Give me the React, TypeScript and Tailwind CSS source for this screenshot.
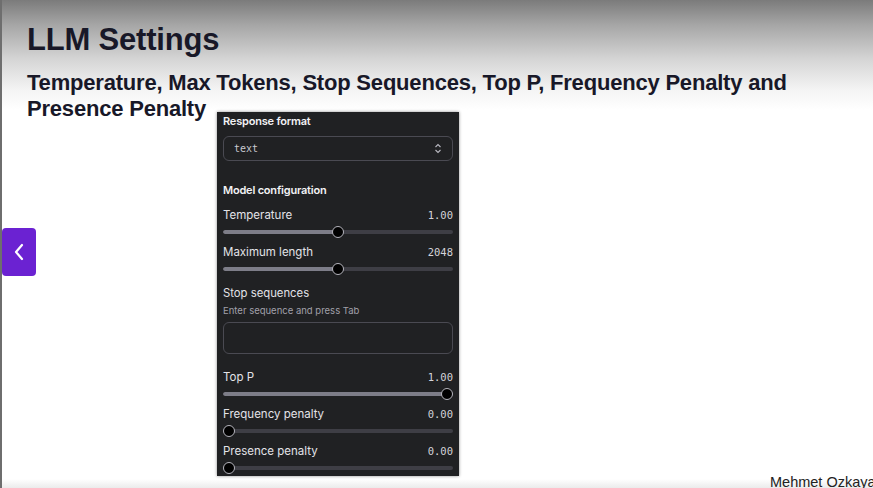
import React from 'react';

type SliderRow = {
  label: string;
  value: string;
  pct: number;
};

const sliders: SliderRow[] = [
  { label: 'Temperature', value: '1.00', pct: 50 },
  { label: 'Maximum length', value: '2048', pct: 50 },
];

const lowerSliders: SliderRow[] = [
  { label: 'Top P', value: '1.00', pct: 100 },
  { label: 'Frequency penalty', value: '0.00', pct: 0 },
  { label: 'Presence penalty', value: '0.00', pct: 0 },
];

function Slider({ label, value, pct }: SliderRow) {
  return (
    <div className="flex flex-col gap-[2px]">
      <div className="flex items-center justify-between h-[16px]">
        <span className="text-[11.5px] text-[#e3e3e8]">{label}</span>
        <span className="font-['DejaVu_Sans_Mono',monospace] text-[10.5px] text-[#d4d4da]">
          {value}
        </span>
      </div>
      <div className="relative h-[12px] flex items-center">
        <div className="w-full h-[4px] rounded-full bg-[#3e3e45] overflow-hidden">
          <div className="h-full rounded-full bg-[#7d7d88]" style={{ width: `${pct}%` }} />
        </div>
        <div className="absolute inset-x-[6px] inset-y-0">
          <div
            className="absolute top-0 -ml-[6px] w-[12px] h-[12px] rounded-full bg-black border-[1.5px] border-[#b4b4bc]"
            style={{ left: `${pct}%` }}
          />
        </div>
      </div>
    </div>
  );
}

function PlaygroundPanel() {
  return (
    <div className="w-[242px] h-[364px] bg-[#202123] shadow-[0_0_3px_rgba(0,0,0,0.45)] px-[6px] pt-[1px] font-['Inter',sans-serif] overflow-hidden flex flex-col">
      <div className="text-[11px] font-semibold text-[#f2f2f5] h-[15px] tracking-[-0.2px]">
        Response format
      </div>
      <div className="mt-[8px] h-[25px] rounded-[6px] border border-[#4a4a52] flex items-center justify-between px-[10px]">
        <span className="font-['DejaVu_Sans_Mono',monospace] text-[10px] text-[#c9c9d0]">text</span>
        <svg width="8" height="11" viewBox="0 0 8 11" fill="none" stroke="#b8b8c0" strokeWidth="1.1">
          <path d="M1.5 4 L4 1.5 L6.5 4" />
          <path d="M1.5 7 L4 9.5 L6.5 7" />
        </svg>
      </div>
      <div className="mt-[21px] text-[11px] font-semibold text-[#f2f2f5] h-[15px] tracking-[-0.2px]">
        Model configuration
      </div>
      <div className="mt-[11px] flex flex-col gap-[7px]">
        {sliders.map((s) => (
          <Slider key={s.label} {...s} />
        ))}
      </div>
      <div className="mt-[10px] text-[11.3px] text-[#e3e3e8] h-[16px] leading-[16px]">Stop sequences</div>
      <div className="mt-[4px] text-[9.5px] text-[#a0a0aa] h-[12px] leading-[12px]">
        Enter sequence and press Tab
      </div>
      <div className="mt-[5px] h-[32px] shrink-0 rounded-[6px] border border-[#4a4a52]" />
      <div className="mt-[16px] flex flex-col gap-[7px]">
        {lowerSliders.map((s) => (
          <Slider key={s.label} {...s} />
        ))}
      </div>
    </div>
  );
}

export default function App() {
  return (
    <div className="relative w-full h-[488px] overflow-hidden border-l-2 border-[#6e6e6e] bg-[linear-gradient(to_bottom,#7b7b7b_0px,#a6a6a6_25px,#d6d6d6_60px,#f4f4f4_90px,#ffffff_110px)] font-['Liberation_Sans',Arial,sans-serif]">
      {/* caption of the previous slide line, only its descenders peek in */}
      <div className="-mt-[26px] pl-[118px] h-[24px] text-[24px] leading-[24px] font-bold text-white whitespace-nowrap">
        Configuring generative AI output using playground query parameters quickly
      </div>
      <div className="px-[25px] pt-[22px]">
        <h1 className="text-[31px] leading-[40px] font-bold text-[#181828] tracking-[-0.2px]">
          LLM Settings
        </h1>
        <h2 className="mt-[10px] text-[22px] leading-[26px] font-bold text-[#181828] tracking-[-0.2px] w-[780px]">
          Temperature, Max Tokens, Stop Sequences, Top P, Frequency Penalty and Presence Penalty
        </h2>
        <div className="ml-[190px] -mt-[10px]">
          <PlaygroundPanel />
        </div>
      </div>
      <button className="absolute left-0 top-[228px] w-[34px] h-[48px] rounded-[4px] bg-[#6b22d2] flex items-center justify-center">
        <svg width="14" height="20" viewBox="0 0 14 20" fill="none" stroke="white" strokeWidth="2.2" strokeLinecap="round" strokeLinejoin="round">
          <path d="M10 3 L4 10 L10 17" />
        </svg>
      </button>
      <div className="absolute left-0 right-0 bottom-0 h-[9px] bg-gradient-to-b from-white to-[#ebebeb]" />
      <div className="absolute left-[768px] top-[472px] text-[14.5px] text-[#222] whitespace-nowrap">
        Mehmet Ozkaya
      </div>
    </div>
  );
}
